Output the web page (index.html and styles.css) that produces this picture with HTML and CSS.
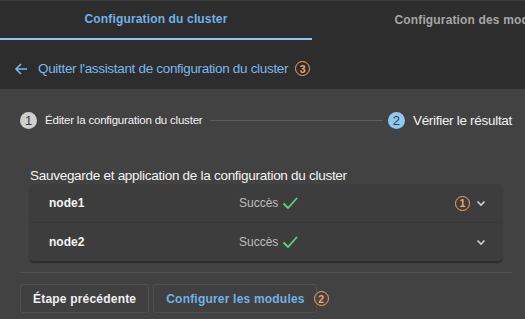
FILE: index.html
```html
<!DOCTYPE html>
<html lang="fr">
<head>
<meta charset="utf-8">
<link rel="stylesheet" href="styles.css">
</head>
<body>
<div class="top">
  <div class="tabs">
    <div class="tab active">Configuration du cluster</div>
    <div class="tab second">Configuration des modules</div>
  </div>
  <div class="back">
    <svg class="arrow" width="14" height="14" viewBox="0 0 14 14"><path d="M13 7H2M7 2L2 7l5 5" fill="none" stroke="#7ab6ea" stroke-width="1.6"/></svg>
    <span class="back-text">Quitter l'assistant de configuration du cluster</span>
    <span class="badge">3</span>
  </div>
</div>
<div class="main">
  <div class="stepper">
    <span class="step-num done">1</span>
    <span class="step-label">Éditer la configuration du cluster</span>
    <span class="step-line"></span>
    <span class="step-num current">2</span>
    <span class="step-label big">Vérifier le résultat</span>
  </div>
  <div class="section-title">Sauvegarde et application de la configuration du cluster</div>
  <div class="card">
    <div class="row">
      <span class="node">node1</span>
      <span class="status">Succès <svg width="16" height="14" viewBox="0 0 16 14"><path d="M1.5 7.5l4.5 4.5L15 2" fill="none" stroke="#5fd18d" stroke-width="1.8"/></svg></span>
      <span class="badge small">1</span>
      <svg class="chev" width="10" height="8" viewBox="0 0 10 8"><path d="M1.5 2.5l3.5 3.5 3.5-3.5" fill="none" stroke="#cfcfcf" stroke-width="1.6"/></svg>
    </div>
    <div class="row">
      <span class="node">node2</span>
      <span class="status">Succès <svg width="16" height="14" viewBox="0 0 16 14"><path d="M1.5 7.5l4.5 4.5L15 2" fill="none" stroke="#5fd18d" stroke-width="1.8"/></svg></span>
      <svg class="chev" width="10" height="8" viewBox="0 0 10 8"><path d="M1.5 2.5l3.5 3.5 3.5-3.5" fill="none" stroke="#cfcfcf" stroke-width="1.6"/></svg>
    </div>
  </div>
  <div class="divider"></div>
  <div class="actions">
    <button class="btn">Étape précédente</button>
    <button class="btn primary">Configurer les modules</button>
    <span class="badge">2</span>
  </div>
</div>
</body>
</html>
```
FILE: styles.css
```css
html, body {
  margin: 0;
  padding: 0;
}
body {
  width: 525px;
  height: 319px;
  overflow: hidden;
  background: #424242;
  font-family: "Liberation Sans", Arial, sans-serif;
  color: #eeeeee;
}
.top {
  background: #2d2d2d;
  border-top: 1px solid #3a3a3a;
  height: 88px;
}
.tabs {
  display: flex;
  height: 39px;
  overflow: hidden;
}
.tab {
  flex: 0 0 312px;
  display: flex;
  justify-content: center;
  align-items: center;
  font-size: 12px;
  font-weight: bold;
  letter-spacing: 0.15px;
  color: #a6a6a6;
  white-space: nowrap;
  box-sizing: border-box;
  padding-bottom: 1px;
}
.tab.second {
  padding-left: 12px;
}
.tab.active {
  color: #70b2e8;
  border-bottom: 2px solid #8cc6f2;
}
.back {
  display: flex;
  align-items: center;
  height: 41px;
  padding-top: 8px;
  padding-left: 14px;
}
.arrow {
  margin-right: 10px;
}
.back-text {
  color: #78b8ec;
  font-size: 13.5px;
  letter-spacing: -0.32px;
}
.badge {
  display: inline-flex;
  justify-content: center;
  align-items: center;
  width: 13px;
  height: 13px;
  border: 1.5px solid #f0a868;
  border-radius: 50%;
  color: #f0a868;
  font-size: 10.5px;
  font-weight: bold;
  margin-left: 7px;
}
.main {
  padding: 0 13px 0 20px;
}
.stepper {
  display: flex;
  align-items: center;
  height: 62px;
}
.step-num {
  width: 17px;
  height: 17px;
  border-radius: 50%;
  display: inline-flex;
  justify-content: center;
  align-items: center;
  font-size: 13px;
  color: #3a3a3a;
  flex: none;
}
.step-num.done {
  background: #cfcfcf;
}
.step-num.current {
  background: #90c8f4;
}
.step-label {
  font-size: 11.5px;
  color: #f2f2f2;
  margin-left: 8px;
  letter-spacing: -0.2px;
  white-space: nowrap;
}
.step-label.big {
  font-size: 13.5px;
  letter-spacing: -0.3px;
}
.step-line {
  flex: 1;
  height: 1px;
  background: #5e5e5e;
  margin: 0 5px 0 7px;
}
.section-title {
  margin-top: 17px;
  margin-left: 10px;
  font-size: 13.5px;
  letter-spacing: -0.28px;
  color: #f4f4f4;
  height: 16px;
  line-height: 16px;
}
.card {
  margin-left: 10px;
  margin-right: 10px;
  background: #3d3d3d;
  border-radius: 4px;
  box-shadow: 0 2px 2px rgba(0,0,0,0.35);
}
.row {
  display: flex;
  align-items: center;
  height: 38px;
  padding: 0 16px 0 19px;
}
.row + .row {
  border-top: 1px solid #393939;
}
.node {
  font-size: 12px;
  font-weight: bold;
  color: #f4f4f4;
  width: 190px;
}
.status {
  display: flex;
  align-items: center;
  gap: 4px;
  font-size: 12px;
  color: #bdbdbd;
  flex: 1;
}
.badge.small {
  margin-right: 3px;
}
.chev {
  margin-left: 3px;
}
.divider {
  height: 1px;
  background: #545454;
  margin-top: 11px;
}
.actions {
  display: flex;
  align-items: center;
  padding-top: 11px;
}
.btn {
  font-family: "Liberation Sans", Arial, sans-serif;
  font-size: 12px;
  font-weight: bold;
  letter-spacing: 0.2px;
  height: 29px;
  padding: 0 12px;
  border: 1px solid #505050;
  border-radius: 3px;
  background: #404040;
  color: #f0f0f0;
  margin-right: 4px;
}
.btn.primary {
  color: #70b2e8;
  margin-right: 0;
  padding: 0 11px 0 12px;
}
.actions .badge {
  margin-left: -3px;
}
```
